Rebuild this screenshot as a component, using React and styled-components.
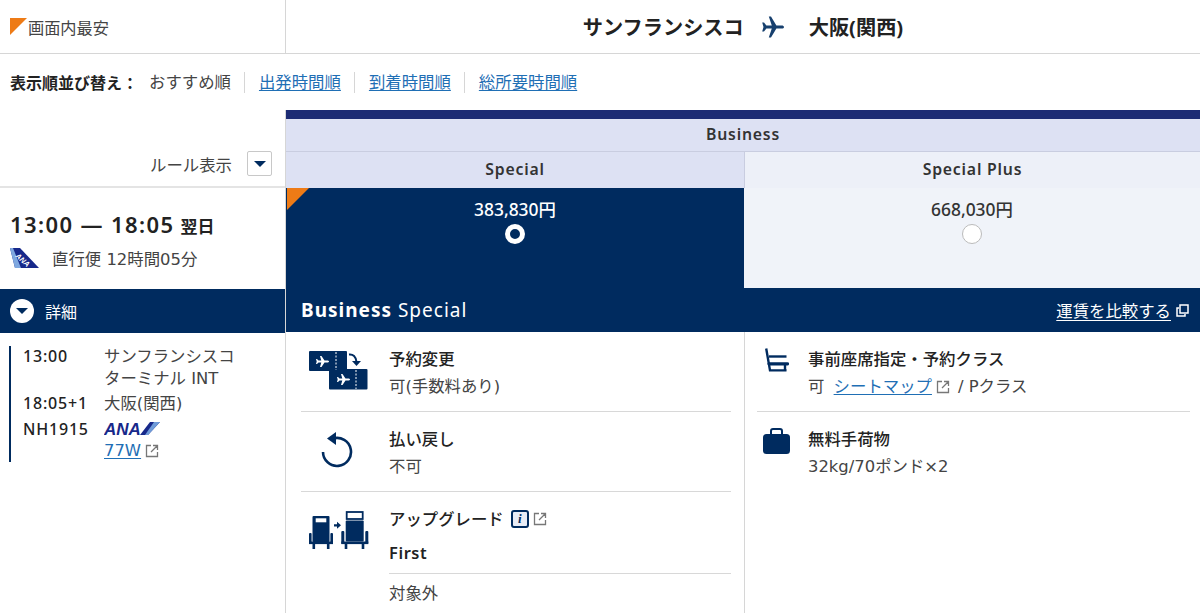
import React from "react";
import styled, { createGlobalStyle } from "styled-components";

const navy = "#002b5f";
const BODY = `"DejaVu Sans", "Noto Sans CJK JP", sans-serif`;
const LABEL = `"Noto Sans", "Noto Sans CJK JP", sans-serif`;

const Global = createGlobalStyle`
  html, body { margin: 0; padding: 0; background: #fff; }
  body { font-family: ${BODY}; color: #333; overflow: hidden; }
  * { box-sizing: border-box; }
`;

const Page = styled.div`
  width: 1200px;
  height: 613px;
  overflow: hidden;
`;
const TopRow = styled.header`
  display: grid;
  grid-template-columns: 286px 1fr;
  height: 54px;
  border-bottom: 1px solid #d6d6d6;
`;
const LegendCell = styled.div`
  display: flex;
  align-items: center;
  gap: 1px;
  padding: 0 0 0 10px;
  border-right: 1px solid #d6d6d6;
  font-size: 16.2px;
  color: #444;
`;
const Legend = styled.span`
  width: 17px;
  height: 17px;
  background: #ee7b16;
  clip-path: polygon(0 0, 100% 0, 0 100%);
`;
const RouteCell = styled.div`
  display: flex;
  align-items: center;
  justify-content: center;
  font-size: 20.2px;
  font-weight: 700;
  color: #222;
  font-family: ${LABEL};
`;
const RouteIcon = styled.span`
  display: flex;
  margin: 0 24px 0 17px;
`;
const SortBar = styled.nav`
  display: flex;
  align-items: center;
  height: 56px;
  padding-left: 10px;
  font-size: 16.4px;
  color: #444;
`;
const SortLabel = styled.strong`
  width: 139px;
  font-size: 16px;
  color: #222;
`;
const SortItem = styled.span`
  padding: 0 13.5px;
  line-height: 21px;
  border-left: ${(p) => (p.$first ? "none" : "1px solid #d6d6d6")};
  ${(p) => p.$first && "padding-left: 0;"}
`;
const Link = styled.a`
  color: #1f6fb5;
  text-decoration: underline;
  text-underline-offset: 2px;
`;
const SeatLink = styled(Link)`
  margin-left: 4px;
`;
const ClassText = styled.span`
  margin-left: 8px;
`;
const Main = styled.div`
  display: grid;
  grid-template-columns: 286px 1fr;
`;
const Left = styled.aside`
  display: flex;
  flex-direction: column;
`;
const RuleRow = styled.div`
  display: flex;
  align-items: center;
  justify-content: flex-end;
  gap: 15px;
  height: 78px;
  padding: 31px 14px 0 0;
  border-bottom: 2px solid #e4e4e4;
  font-size: 16.4px;
  color: #444;
`;
const RuleButton = styled.span`
  display: flex;
  align-items: center;
  justify-content: center;
  width: 25px;
  height: 25px;
  border: 1px solid #c8c8c8;
  border-radius: 2px;
`;
const Down = styled.span`
  width: 0;
  height: 0;
  border-left: 6px solid transparent;
  border-right: 6px solid transparent;
  border-top: 6px solid ${navy};
`;
const Summary = styled.div`
  height: 101px;
  padding: 22px 0 0 10px;
`;
const Times = styled.div`
  display: flex;
  align-items: baseline;
  gap: 6px;
  font-family: ${LABEL};
  font-size: 22px;
  font-weight: 600;
  letter-spacing: 1.4px;
  line-height: 28px;
  color: #222;
`;
const NextDay = styled.span`
  font-size: 17px;
  font-weight: 700;
  letter-spacing: 0;
`;
const Direct = styled.div`
  display: flex;
  align-items: center;
  gap: 13px;
  margin-top: 5px;
  font-size: 16.4px;
  color: #444;
`;
const DetailBar = styled.div`
  display: flex;
  align-items: center;
  gap: 11px;
  height: 44px;
  padding-left: 10px;
  background: ${navy};
  color: #fff;
  font-size: 16px;
`;
const DetailDot = styled.span`
  display: flex;
  align-items: center;
  justify-content: center;
  width: 24px;
  height: 24px;
  border-radius: 50%;
  background: #fff;
`;
const Itinerary = styled.dl`
  display: grid;
  grid-template-columns: 81px 1fr;
  row-gap: 4px;
  align-content: start;
  width: 275px;
  height: 116px;
  margin: 13px 0 0 9px;
  padding-left: 12px;
  border-left: 2px solid ${navy};
  font-size: 16.4px;
  line-height: 21.5px;
  color: #444;
`;
const Term = styled.dt`
  font-family: ${LABEL};
  font-size: 16px;
  font-weight: 500;
  color: #222;
  letter-spacing: 0.8px;
`;
const Desc = styled.dd`
  margin: 0;
`;
const LogoWrap = styled.div`
  display: flex;
  align-items: center;
  height: 21.5px;
`;
const Ext = styled.svg`
  width: 14px;
  height: 14px;
  vertical-align: -2px;
  margin-left: 4px;
  fill: none;
  stroke: #777;
  stroke-width: 1.3;
`;
const Right = styled.section`
  border-left: 1px solid #d6d6d6;
  margin-left: -1px;
`;
const TopStrip = styled.div`
  height: 9px;
  background: #1c2b74;
`;
const BusinessHead = styled.div`
  height: 33px;
  line-height: 31px;
  text-align: center;
  background: #dde1f3;
  border-bottom: 1px solid #c9cde0;
  font-family: ${LABEL};
  font-size: 15.8px;
  font-weight: 600;
  letter-spacing: 0.8px;
  color: #333;
`;
const TwoCols = styled.div`
  display: grid;
  grid-template-columns: 458px 1fr;
`;
const FareHead = styled.div`
  height: 36px;
  line-height: 35px;
  text-align: center;
  background: ${(p) => (p.$alt ? "#edf0f8" : "#dde1f3")};
  border-left: ${(p) => (p.$alt ? "1px solid #c9cde0" : "none")};
  font-family: ${LABEL};
  font-size: 15.8px;
  font-weight: 600;
  letter-spacing: 0.8px;
  color: #333;
`;
const FareCell = styled.div`
  position: relative;
  height: 100px;
  padding-top: 11px;
  text-align: center;
  background: ${(p) => (p.$active ? navy : "#f0f3f9")};
  color: ${(p) => (p.$active ? "#fff" : "#333")};
  font-family: ${LABEL};
  font-size: 17.4px;
  font-weight: 500;
  line-height: 21px;
`;
const Corner = styled.span`
  position: absolute;
  left: 1px;
  top: 0;
  width: 22px;
  height: 22px;
  background: #ee7b16;
  clip-path: polygon(0 0, 100% 0, 0 100%);
`;
const Radio = styled.span`
  display: block;
  width: 20px;
  height: 20px;
  margin: 4px auto 0;
  border-radius: 50%;
  background: ${(p) => (p.$on ? navy : "#fff")};
  border: ${(p) => (p.$on ? "5px solid #fff" : "1px solid #bbb")};
`;
const TitleBar = styled.div`
  display: flex;
  align-items: center;
  justify-content: space-between;
  height: 44px;
  padding: 0 11px 0 15px;
  background: ${navy};
  color: #fff;
`;
const Title = styled.div`
  font-family: ${LABEL};
  font-size: 19px;
  letter-spacing: 1px;
  strong { font-weight: 700; }
`;
const Compare = styled.a`
  display: flex;
  align-items: center;
  gap: 5px;
  font-size: 16.4px;
  color: #fff;
  text-decoration: underline;
  text-underline-offset: 3px;
`;
const Col = styled.div`
  padding: ${(p) => (p.$alt ? "0 10px 0 12px" : "0 13px 0 15px")};
  border-left: ${(p) => (p.$alt ? "1px solid #d6d6d6" : "none")};
  height: 281px;
`;
const Feature = styled.div`
  display: grid;
  grid-template-columns: ${(p) => (p.$alt ? "51px" : "88px")} 1fr;
  height: ${(p) => p.$h || 80}px;
  padding-top: 16px;
  border-bottom: ${(p) => (p.$last ? "none" : "1px solid #d8d8d8")};
`;
const IconBox = styled.div`
  padding-top: ${(p) => p.$pt || 0}px;
  padding-left: ${(p) => p.$pl || 0}px;
`;
const FeatureTitle = styled.div`
  display: flex;
  align-items: center;
  font-family: ${LABEL};
  font-size: 16.4px;
  font-weight: 500;
  line-height: 22px;
  color: #222;
`;
const FeatureText = styled.div`
  margin-top: 6px;
  font-size: 16.4px;
  line-height: 21px;
  color: #444;
`;
const Info = styled.span`
  display: inline-flex;
  align-items: center;
  justify-content: center;
  width: 18px;
  height: 18px;
  margin-left: 7px;
  border: 2px solid ${navy};
  border-radius: 3px;
  background: #e8ecf6;
  color: ${navy};
  font: italic 700 13px "Liberation Serif", serif;
`;
const Sub = styled.div`
  margin-top: 12px;
  font-family: ${LABEL};
  font-size: 16.4px;
  font-weight: 600;
  line-height: 22px;
  letter-spacing: 0.6px;
  color: #222;
`;
const SubRow = styled.div`
  margin-top: 9px;
  padding-top: 9px;
  border-top: 1px solid #d8d8d8;
  font-size: 16.4px;
  line-height: 21px;
  color: #444;
`;

const ExtIcon = () => (
  <Ext viewBox="0 0 14 14">
    <path d="M6 1.5H1.5v11h11V8M8 1.5h4.5V6M12.5 1.5L6 8" />
  </Ext>
);
const Plane = () => (
  <svg width="24" height="24" viewBox="0 0 24 24" fill="#17406e">
    <path d="M23 12c0-1-1-1.6-2.2-1.6h-5.4L10 1.5H7.8l3 8.9H5.4L3 7.4H1.2l1.3 4.6-1.3 4.6H3l2.4-3h5.4l-3 8.9H10l5.4-8.9h5.4C22 13.6 23 13 23 12z" />
  </svg>
);
const TailLogo = () => (
  <svg width="29" height="20" viewBox="0 0 29 20">
    <path d="M0 0h10l19 20H5z" fill="#17288a" />
    <path d="M0 0h3l8 20H5z" fill="#7fa8e0" />
    <text x="6" y="12" fontSize="7.5" fontWeight="700" fontStyle="italic" fill="#fff" transform="rotate(42 10 9)" fontFamily="Liberation Sans">ANA</text>
  </svg>
);
const AnaLogo = () => (
  <svg width="56" height="18" viewBox="0 0 56 18">
    <text x="0" y="15" fontFamily="Liberation Sans, sans-serif" fontSize="17" fontWeight="700" fontStyle="italic" fill="#17288a">ANA</text>
    <path d="M46 2h10L44 15H36z" fill="#17288a" />
    <path d="M50 2h6L44 15h-3z" fill="#6f9bd8" />
  </svg>
);
const ChangeIcon = () => (
  <svg width="60" height="40" viewBox="0 0 60 40" fill={navy}>
    <rect x="0" y="0" width="38" height="20" rx="1" />
    <rect x="20" y="18" width="38.5" height="20.5" rx="1" />
    <path d="M27 1v18" stroke="#fff" strokeDasharray="2 1.5" />
    <path d="M47 19v19" stroke="#fff" strokeDasharray="2 1.5" />
    <g fill="#fff">
      <path d="M20 10.5c0-.8-1-1-2-1h-2.5L12.5 5H11l1.3 4.5H9.5L8 8H7l.7 2.5L7 13h1l1.5-1.5h2.8L11 16h1.5l3-4.5H18c1 0 2-.2 2-1z" />
      <path d="M41 28.5c0-.8-1-1-2-1h-2.5L33.5 23H32l1.3 4.5h-2.8L29 26h-1l.7 2.5L28 31h1l1.5-1.5h2.8L32 34h1.5l3-4.5H39c1 0 2-.2 2-1z" />
    </g>
    <path d="M40 3.5c4-.5 7 2 7.5 7.5" fill="none" stroke={navy} strokeWidth="2" />
    <path d="M43 10h9l-4.5 5z" />
  </svg>
);
const RefundIcon = () => (
  <svg width="34" height="36" viewBox="0 0 34 36" fill="none">
    <path d="M14 6.5a14 14 0 1 1-10 13.5" stroke={navy} strokeWidth="2.6" />
    <path d="M17 0v13L8 6.5z" fill={navy} />
  </svg>
);
const UpgradeIcon = () => (
  <svg width="60" height="39" viewBox="0 0 60 39" fill={navy}>
    <rect x="3.5" y="5" width="17" height="26" rx="1" />
    <rect x="6.7" y="7.3" width="10.6" height="4" fill="#fff" />
    <rect x="0" y="22" width="2.6" height="11" rx="1" />
    <rect x="21.4" y="22" width="2.6" height="11" rx="1" />
    <rect x="0" y="30.5" width="24" height="2.6" />
    <rect x="3.5" y="33" width="2.6" height="5" />
    <rect x="17.9" y="33" width="2.6" height="5" />
    <path d="M25 13.2h3V10.8l4 3.5-4 3.5v-2.4h-3z" />
    <rect x="37.7" y="1" width="16" height="7" fill="#fff" stroke={navy} strokeWidth="1.8" />
    <rect x="36.7" y="9.5" width="18" height="21" rx="1" />
    <rect x="32.3" y="20" width="3" height="13" rx="1" />
    <rect x="56.3" y="20" width="3" height="13" rx="1" />
    <rect x="32.3" y="30.5" width="27" height="2.6" />
    <rect x="35.7" y="33" width="2.6" height="5" />
    <rect x="52.7" y="33" width="2.6" height="5" />
  </svg>
);
const SeatIcon = () => (
  <svg width="24" height="24" viewBox="0 0 24 24" fill="none" stroke={navy} strokeWidth="2.4">
    <path d="M1.2 0.5L5 22.4H21.5" />
    <path d="M4 8.5h17.5" />
    <path d="M4 15.8h18.5" strokeWidth="3.2" strokeLinecap="round" />
    <path d="M20 15.5v7" />
  </svg>
);
const BagIcon = () => (
  <svg width="27" height="26" viewBox="0 0 27 26" fill={navy}>
    <rect x="0" y="6" width="27" height="20" rx="3.5" />
    <path d="M8 7V3a2 2 0 0 1 2-2h7a2 2 0 0 1 2 2v4" fill="none" stroke={navy} strokeWidth="2" />
  </svg>
);

export default function App() {
  return (
    <Page>
      <Global />
      <TopRow>
        <LegendCell><Legend />画面内最安</LegendCell>
        <RouteCell>
          <span>サンフランシスコ</span>
          <RouteIcon><Plane /></RouteIcon>
          <span>大阪(関西)</span>
        </RouteCell>
      </TopRow>
      <SortBar>
        <SortLabel>表示順並び替え：</SortLabel>
        <SortItem $first>おすすめ順</SortItem>
        <SortItem><Link>出発時間順</Link></SortItem>
        <SortItem><Link>到着時間順</Link></SortItem>
        <SortItem><Link>総所要時間順</Link></SortItem>
      </SortBar>
      <Main>
        <Left>
          <RuleRow>
            ルール表示
            <RuleButton><Down /></RuleButton>
          </RuleRow>
          <Summary>
            <Times>13:00 — 18:05 <NextDay>翌日</NextDay></Times>
            <Direct><TailLogo />直行便 12時間05分</Direct>
          </Summary>
          <DetailBar>
            <DetailDot><Down /></DetailDot>
            詳細
          </DetailBar>
          <Itinerary>
            <Term>13:00</Term>
            <Desc>サンフランシスコ<br />ターミナル INT</Desc>
            <Term>18:05+1</Term>
            <Desc>大阪(関西)</Desc>
            <Term>NH1915</Term>
            <Desc>
              <LogoWrap><AnaLogo /></LogoWrap>
              <Link>77W</Link><ExtIcon />
            </Desc>
          </Itinerary>
        </Left>
        <Right>
          <TopStrip />
          <BusinessHead>Business</BusinessHead>
          <TwoCols>
            <FareHead>Special</FareHead>
            <FareHead $alt>Special Plus</FareHead>
            <FareCell $active>
              <Corner />
              383,830円
              <Radio $on />
            </FareCell>
            <FareCell>
              668,030円
              <Radio />
            </FareCell>
          </TwoCols>
          <TitleBar>
            <Title><strong>Business</strong> Special</Title>
            <Compare>
              運賃を比較する
              <svg width="13" height="13" viewBox="0 0 13 13" fill="none" stroke="#fff" strokeWidth="1.5">
                <rect x="4" y="1" width="8" height="8" />
                <path d="M3 4H1v8h8v-2" />
              </svg>
            </Compare>
          </TitleBar>
          <TwoCols>
            <Col>
              <Feature>
                <IconBox $pt={3} $pl={8}><ChangeIcon /></IconBox>
                <div>
                  <FeatureTitle>予約変更</FeatureTitle>
                  <FeatureText>可(手数料あり)</FeatureText>
                </div>
              </Feature>
              <Feature>
                <IconBox $pt={4} $pl={18}><RefundIcon /></IconBox>
                <div>
                  <FeatureTitle>払い戻し</FeatureTitle>
                  <FeatureText>不可</FeatureText>
                </div>
              </Feature>
              <Feature $last $h={122}>
                <IconBox $pt={3} $pl={8}><UpgradeIcon /></IconBox>
                <div>
                  <FeatureTitle>アップグレード<Info>i</Info><ExtIcon /></FeatureTitle>
                  <Sub>First</Sub>
                  <SubRow>対象外</SubRow>
                </div>
              </Feature>
            </Col>
            <Col $alt>
              <Feature $alt>
                <IconBox $pl={8}><SeatIcon /></IconBox>
                <div>
                  <FeatureTitle>事前座席指定・予約クラス</FeatureTitle>
                  <FeatureText>可 <SeatLink>シートマップ</SeatLink><ExtIcon /><ClassText>/ Pクラス</ClassText></FeatureText>
                </div>
              </Feature>
              <Feature $alt $last>
                <IconBox $pl={6}><BagIcon /></IconBox>
                <div>
                  <FeatureTitle>無料手荷物</FeatureTitle>
                  <FeatureText>32kg/70ポンド×2</FeatureText>
                </div>
              </Feature>
            </Col>
          </TwoCols>
        </Right>
      </Main>
    </Page>
  );
}
